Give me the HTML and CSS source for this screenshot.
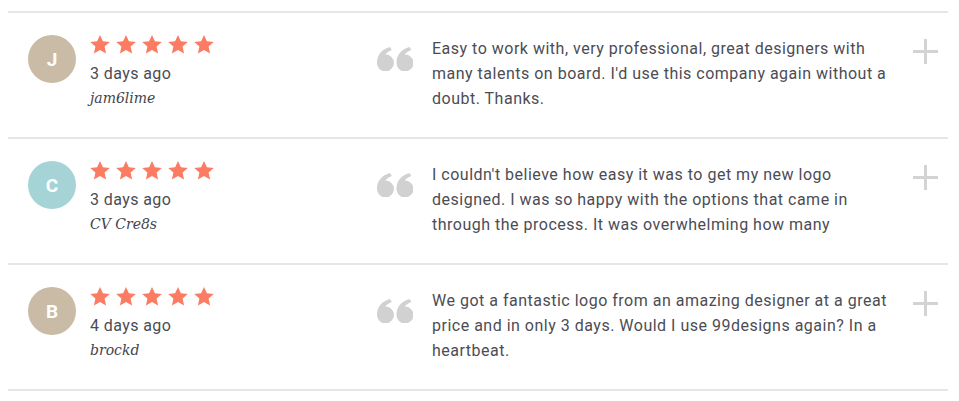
FILE: index.html
```html
<!DOCTYPE html>
<html lang="en">
<head>
<meta charset="utf-8"/>
<meta content="width=device-width, initial-scale=1" name="viewport"/>
<title>Reviews</title>
<link rel="stylesheet" href="styles.css">
</head>
<body>
<div class="reviews">

  <div class="review">
    <div class="author">
      <div class="avatar tan">J</div>
      <div class="meta">
        <div class="stars">
          <svg viewBox="0 0 20 19"><path d="M10 0l2.9 6.3 6.9.7-5.2 4.6 1.5 6.8L10 14.9 3.9 18.4l1.5-6.8L.2 7l6.9-.7z"/></svg>
          <svg viewBox="0 0 20 19"><path d="M10 0l2.9 6.3 6.9.7-5.2 4.6 1.5 6.8L10 14.9 3.9 18.4l1.5-6.8L.2 7l6.9-.7z"/></svg>
          <svg viewBox="0 0 20 19"><path d="M10 0l2.9 6.3 6.9.7-5.2 4.6 1.5 6.8L10 14.9 3.9 18.4l1.5-6.8L.2 7l6.9-.7z"/></svg>
          <svg viewBox="0 0 20 19"><path d="M10 0l2.9 6.3 6.9.7-5.2 4.6 1.5 6.8L10 14.9 3.9 18.4l1.5-6.8L.2 7l6.9-.7z"/></svg>
          <svg viewBox="0 0 20 19"><path d="M10 0l2.9 6.3 6.9.7-5.2 4.6 1.5 6.8L10 14.9 3.9 18.4l1.5-6.8L.2 7l6.9-.7z"/></svg>
        </div>
        <div class="date">3 days ago</div>
        <div class="user">jam6lime</div>
      </div>
    </div>
    <svg class="quote" viewBox="0 0 36 24"><path d="M0 15.5C0 8 5 2 13 0l1.8 3C10.8 4.8 8.8 6.6 8.3 7.5A8.5 8.5 0 1 1 0 15.5z"/><path d="M19.5 15.5C19.5 8 24.5 2 32.5 0l1.8 3C30.3 4.8 28.3 6.6 27.8 7.5A8.5 8.5 0 1 1 19.5 15.5z"/></svg>
    <p class="text">Easy to work with, very professional, great designers with many talents on board. I'd use this company again without a doubt. Thanks.</p>
    <div class="plus"></div>
  </div>

  <div class="review">
    <div class="author">
      <div class="avatar teal">C</div>
      <div class="meta">
        <div class="stars">
          <svg viewBox="0 0 20 19"><path d="M10 0l2.9 6.3 6.9.7-5.2 4.6 1.5 6.8L10 14.9 3.9 18.4l1.5-6.8L.2 7l6.9-.7z"/></svg>
          <svg viewBox="0 0 20 19"><path d="M10 0l2.9 6.3 6.9.7-5.2 4.6 1.5 6.8L10 14.9 3.9 18.4l1.5-6.8L.2 7l6.9-.7z"/></svg>
          <svg viewBox="0 0 20 19"><path d="M10 0l2.9 6.3 6.9.7-5.2 4.6 1.5 6.8L10 14.9 3.9 18.4l1.5-6.8L.2 7l6.9-.7z"/></svg>
          <svg viewBox="0 0 20 19"><path d="M10 0l2.9 6.3 6.9.7-5.2 4.6 1.5 6.8L10 14.9 3.9 18.4l1.5-6.8L.2 7l6.9-.7z"/></svg>
          <svg viewBox="0 0 20 19"><path d="M10 0l2.9 6.3 6.9.7-5.2 4.6 1.5 6.8L10 14.9 3.9 18.4l1.5-6.8L.2 7l6.9-.7z"/></svg>
        </div>
        <div class="date">3 days ago</div>
        <div class="user">CV Cre8s</div>
      </div>
    </div>
    <svg class="quote" viewBox="0 0 36 24"><path d="M0 15.5C0 8 5 2 13 0l1.8 3C10.8 4.8 8.8 6.6 8.3 7.5A8.5 8.5 0 1 1 0 15.5z"/><path d="M19.5 15.5C19.5 8 24.5 2 32.5 0l1.8 3C30.3 4.8 28.3 6.6 27.8 7.5A8.5 8.5 0 1 1 19.5 15.5z"/></svg>
    <p class="text">I couldn't believe how easy it was to get my new logo designed. I was so happy with the options that came in through the process. It was overwhelming how many</p>
    <div class="plus"></div>
  </div>

  <div class="review">
    <div class="author">
      <div class="avatar tan">B</div>
      <div class="meta">
        <div class="stars">
          <svg viewBox="0 0 20 19"><path d="M10 0l2.9 6.3 6.9.7-5.2 4.6 1.5 6.8L10 14.9 3.9 18.4l1.5-6.8L.2 7l6.9-.7z"/></svg>
          <svg viewBox="0 0 20 19"><path d="M10 0l2.9 6.3 6.9.7-5.2 4.6 1.5 6.8L10 14.9 3.9 18.4l1.5-6.8L.2 7l6.9-.7z"/></svg>
          <svg viewBox="0 0 20 19"><path d="M10 0l2.9 6.3 6.9.7-5.2 4.6 1.5 6.8L10 14.9 3.9 18.4l1.5-6.8L.2 7l6.9-.7z"/></svg>
          <svg viewBox="0 0 20 19"><path d="M10 0l2.9 6.3 6.9.7-5.2 4.6 1.5 6.8L10 14.9 3.9 18.4l1.5-6.8L.2 7l6.9-.7z"/></svg>
          <svg viewBox="0 0 20 19"><path d="M10 0l2.9 6.3 6.9.7-5.2 4.6 1.5 6.8L10 14.9 3.9 18.4l1.5-6.8L.2 7l6.9-.7z"/></svg>
        </div>
        <div class="date">4 days ago</div>
        <div class="user">brockd</div>
      </div>
    </div>
    <svg class="quote" viewBox="0 0 36 24"><path d="M0 15.5C0 8 5 2 13 0l1.8 3C10.8 4.8 8.8 6.6 8.3 7.5A8.5 8.5 0 1 1 0 15.5z"/><path d="M19.5 15.5C19.5 8 24.5 2 32.5 0l1.8 3C30.3 4.8 28.3 6.6 27.8 7.5A8.5 8.5 0 1 1 19.5 15.5z"/></svg>
    <p class="text">We got a fantastic logo from an amazing designer at a great price and in only 3 days. Would I use 99designs again? In a heartbeat.</p>
    <div class="plus"></div>
  </div>

</div>
</body>
</html>
```

FILE: styles.css
```css
body {
  margin: 0;
  padding: 11px 11px 0 8px;
  background: white;
  font-family: Roboto, "Liberation Sans", sans-serif;
  color: #4c4c55;
}
.reviews {
  width: 940px;
  border-bottom: 2px solid #e6e6e6;
}
.review {
  display: flex;
  align-items: flex-start;
  box-sizing: border-box;
  height: 126px;
  border-top: 2px solid #e6e6e6;
  padding: 21px 0 0 20px;
}
.author {
  width: 349px;
  display: flex;
  gap: 14px;
  flex-shrink: 0;
}
.avatar {
  width: 48px;
  height: 48px;
  border-radius: 50%;
  color: white;
  font-weight: bold;
  font-size: 19px;
  display: flex;
  align-items: center;
  justify-content: center;
  margin-top: 1px;
}
.tan { background: #c9bba5; }
.teal { background: #a6d3d6; }
.meta {
  display: flex;
  flex-direction: column;
}
.stars {
  display: flex;
  gap: 6px;
  height: 20px;
  align-items: center;
}
.stars svg {
  width: 20px;
  height: 19px;
  fill: #fc7b63;
}
.date {
  font-size: 16px;
  letter-spacing: 0.4px;
  line-height: 24px;
  margin-top: 8px;
}
.user {
  font-family: "DejaVu Serif", "Liberation Serif", serif;
  font-style: italic;
  font-size: 14px;
  line-height: 24px;
  color: #44444c;
}
.quote {
  width: 36px;
  height: 24px;
  fill: #d1d1d1;
  margin-top: 13px;
  margin-right: 19px;
  flex-shrink: 0;
}
.text {
  width: 460px;
  margin: 2px 0 0;
  font-size: 16px;
  letter-spacing: 0.5px;
  line-height: 25px;
}
.plus {
  position: relative;
  width: 25px;
  height: 25px;
  margin: 5px 0 0 21px;
}
.plus::before,
.plus::after {
  content: "";
  position: absolute;
  background: #d3d3d3;
}
.plus::before {
  left: 11px;
  top: 0;
  width: 3px;
  height: 25px;
}
.plus::after {
  left: 0;
  top: 11px;
  width: 25px;
  height: 3px;
}
```
